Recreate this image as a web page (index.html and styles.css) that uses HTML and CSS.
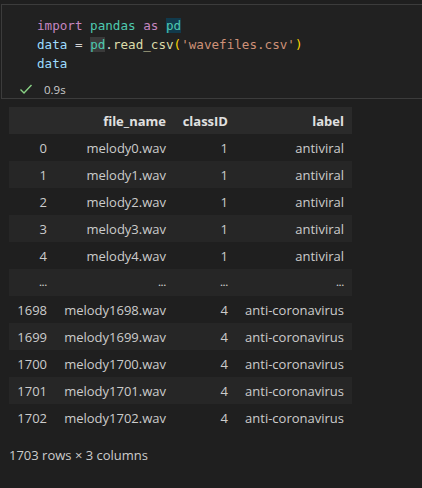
FILE: index.html
```html
<!DOCTYPE html>
<html>
<head>
<meta charset="utf-8">
<link rel="stylesheet" href="styles.css">
</head>
<body>
<div class="cell">
  <div class="code">
    <div class="line"><span class="kw">import</span> <span class="mod">pandas</span> <span class="kw">as</span> <span class="mod hl1">pd</span></div>
    <div class="line"><span class="var">data</span> <span class="op">=</span> <span class="mod hl2">pd</span><span class="op">.</span><span class="fn">read_csv</span><span class="br">(</span><span class="str">'wavefiles.csv'</span><span class="br">)</span></div>
    <div class="line"><span class="var">data</span></div>
  </div>
  <div class="status">
    <svg class="check" width="14" height="14" viewBox="0 0 14 14"><path d="M1.5 7.5 L5 11 L12.5 3" fill="none" stroke="#89d185" stroke-width="1.4"/></svg>
    <span class="time">0.9s</span>
  </div>
</div>
<div class="output">
  <table class="df">
    <thead>
      <tr><th class="idx"></th><th class="c1">file_name</th><th class="c2">classID</th><th class="c3">label</th></tr>
    </thead>
    <tbody>
      <tr><th>0</th><td>melody0.wav</td><td>1</td><td>antiviral</td></tr>
      <tr><th>1</th><td>melody1.wav</td><td>1</td><td>antiviral</td></tr>
      <tr><th>2</th><td>melody2.wav</td><td>1</td><td>antiviral</td></tr>
      <tr><th>3</th><td>melody3.wav</td><td>1</td><td>antiviral</td></tr>
      <tr><th>4</th><td>melody4.wav</td><td>1</td><td>antiviral</td></tr>
      <tr class="dots"><th>...</th><td>...</td><td>...</td><td>...</td></tr>
      <tr><th>1698</th><td>melody1698.wav</td><td>4</td><td>anti-coronavirus</td></tr>
      <tr><th>1699</th><td>melody1699.wav</td><td>4</td><td>anti-coronavirus</td></tr>
      <tr><th>1700</th><td>melody1700.wav</td><td>4</td><td>anti-coronavirus</td></tr>
      <tr><th>1701</th><td>melody1701.wav</td><td>4</td><td>anti-coronavirus</td></tr>
      <tr><th>1702</th><td>melody1702.wav</td><td>4</td><td>anti-coronavirus</td></tr>
    </tbody>
  </table>
  <p class="summary">1703 rows × 3 columns</p>
</div>
</body>
</html>
```
FILE: styles.css
```css
html, body {
  margin: 0;
  padding: 0;
  background: #1f1f1f;
  height: 100%;
  overflow: hidden;
}
body {
  font-family: "Open Sans", "Noto Sans", sans-serif;
  color: #cccccc;
}
.cell {
  margin: 4px -10px 0 1px;
  height: 93px;
  border: 1px solid #3c3c3c;
  background: #212121;
  position: relative;
}
.code {
  padding: 11px 0 0 35px;
  font-family: "DejaVu Sans Mono", "Liberation Mono", monospace;
  font-size: 12.6px;
}
.line {
  height: 19px;
  line-height: 19px;
  white-space: pre;
}
.kw { color: #c586c0; }
.mod { color: #4ec9b0; }
.var { color: #9cdcfe; }
.op { color: #d4d4d4; }
.fn { color: #dcdcaa; }
.br { color: #ffd700; }
.str { color: #ce9178; }
.hl1 { background: #113a4c; }
.hl2 { background: #3a3a3a; }
.status {
  display: flex;
  align-items: center;
  padding: 8px 0 0 17px;
  height: 16px;
}
.check { display: block; }
.time {
  margin-left: 11px;
  font-size: 11.5px;
  color: #cccccc;
}
.output {
  padding: 8px 0 0 9px;
}
.df {
  border-collapse: collapse;
  font-size: 13px;
  width: 343px;
  table-layout: fixed;
}
.df th, .df td {
  height: 27px;
  padding: 0 8px;
  text-align: right;
  white-space: nowrap;
  color: #cccccc;
  font-weight: normal;
}
.df thead th {
  font-weight: bold;
  color: #e0e0e0;
  background: #2a2a2a;
}
.df .idx { width: 30px; }
.df .c1 { width: 103px; }
.df .c2 { width: 46px; }
.df .c3 { width: 100px; }
.df tbody tr:nth-child(even) { background: #262626; }
.df tbody tr:nth-child(odd) { background: #1f1f1f; }
.dots th, .dots td { font-size: 9px; font-weight: bold; }
.summary {
  margin: 15px 0 0 0;
  font-size: 13px;
  color: #cccccc;
}
```
